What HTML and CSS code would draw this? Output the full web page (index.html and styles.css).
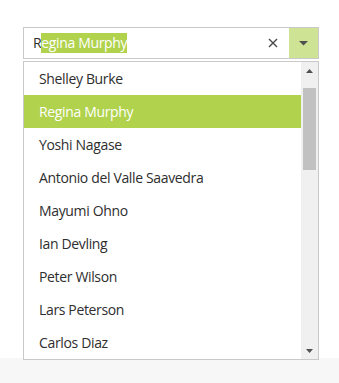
FILE: index.html
```html
<!DOCTYPE html>
<html>
<head>
<meta charset="utf-8">
<link rel="stylesheet" href="styles.css">
</head>
<body>
<div class="demo">
  <div class="combo">
    <div class="combo-wrap">
      <div class="combo-input"><span>R</span><span class="sel">egina Murphy</span></div>
      <span class="clear" aria-label="clear">
        <svg width="10" height="10" viewBox="0 0 10 10"><path d="M1 1 L9 9 M9 1 L1 9" stroke="#4a4a4a" stroke-width="1.4" fill="none"/></svg>
      </span>
      <span class="toggle">
        <svg width="9" height="5" viewBox="0 0 9 5"><path d="M0 0 H9 L4.5 4.5 Z" fill="#505050"/></svg>
      </span>
    </div>
    <div class="popup">
      <ul class="items">
        <li>Shelley Burke</li>
        <li class="selected">Regina Murphy</li>
        <li>Yoshi Nagase</li>
        <li>Antonio del Valle Saavedra</li>
        <li>Mayumi Ohno</li>
        <li>Ian Devling</li>
        <li>Peter Wilson</li>
        <li>Lars Peterson</li>
        <li>Carlos Diaz</li>
      </ul>
      <div class="scrollbar">
        <div class="arrow up"><svg width="7" height="4" viewBox="0 0 7 4"><path d="M0 4 H7 L3.5 0 Z" fill="#505050"/></svg></div>
        <div class="track"><div class="thumb"></div></div>
        <div class="arrow down"><svg width="7" height="4" viewBox="0 0 7 4"><path d="M0 0 H7 L3.5 4 Z" fill="#505050"/></svg></div>
      </div>
    </div>
  </div>
</div>
<div class="footer"></div>
</body>
</html>
```
FILE: styles.css
```css
html, body {
  margin: 0;
  padding: 0;
  background: #ffffff;
  font-family: "Open Sans", "Noto Sans", sans-serif;
  font-size: 14px;
  letter-spacing: -0.35px;
  color: #2e2e2e;
}
.demo {
  height: 358px;
  box-sizing: border-box;
  padding: 27px 0 0 23px;
}
.footer {
  height: 25px;
  background: #f7f7f7;
}
.combo {
  position: relative;
  width: 296px;
}
.combo-wrap {
  display: flex;
  align-items: stretch;
  height: 32px;
  box-sizing: border-box;
  border: 1px solid #c9c9c9;
  background: #fff;
}
.combo-input {
  flex: 1;
  display: flex;
  align-items: center;
  padding-left: 9px;
  line-height: 20px;
  white-space: nowrap;
}
.combo-input .sel {
  background: #b0d24c;
  color: #fff;
}
.clear {
  width: 29px;
  display: flex;
  align-items: center;
  justify-content: center;
  margin-right: 2px;
}
.toggle {
  width: 29px;
  background: #cfe394;
  display: flex;
  align-items: center;
  justify-content: center;
}
.popup {
  position: absolute;
  top: 34px;
  left: 0;
  width: 296px;
  height: 299px;
  box-sizing: border-box;
  border: 1px solid #c9c9c9;
  background: #fff;
  display: flex;
}
.items {
  flex: 1;
  list-style: none;
  margin: 0;
  padding: 0;
}
.items li {
  height: 33px;
  line-height: 33px;
  padding-left: 15px;
  white-space: nowrap;
}
.items li.selected {
  background: #b0d24c;
  color: #fff;
}
.scrollbar {
  width: 17px;
  background: #f0f0f0;
  display: flex;
  flex-direction: column;
}
.arrow {
  height: 17px;
  display: flex;
  align-items: center;
  justify-content: center;
}
.track {
  flex: 1;
  padding: 9px 2px 0 2px;
}
.thumb {
  height: 82px;
  background: #c1c1c1;
}
```
